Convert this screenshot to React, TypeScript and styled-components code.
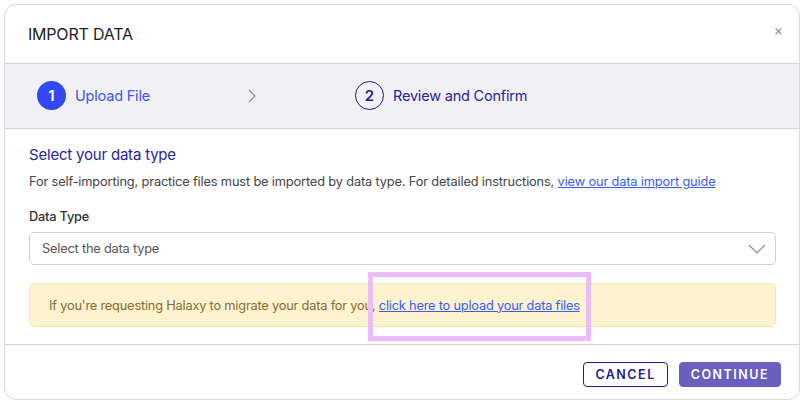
import styled, { createGlobalStyle } from 'styled-components'

const GlobalStyle = createGlobalStyle`
  html, body {
    margin: 0;
    padding: 0;
    background: #ffffff;
    font-family: Inter, "Noto Sans", sans-serif;
  }
`

const Modal = styled.div`
  margin: 4px;
  width: 796px;
  height: 396px;
  box-sizing: border-box;
  border: 1px solid #d9d9de;
  border-radius: 12px;
  display: flex;
  flex-direction: column;
  overflow: hidden;
  background: #ffffff;
`

const Header = styled.div`
  height: 59px;
  display: flex;
  align-items: center;
  justify-content: space-between;
  padding: 0 16px 0 23px;
  border-bottom: 1px solid #d6d6dc;
  box-sizing: border-box;
`

const Title = styled.h1`
  margin: 0;
  font-size: 16px;
  font-weight: 400;
  color: #1d1d1f;
  letter-spacing: -0.2px;
`

const Close = styled.button`
  border: none;
  background: none;
  padding: 0;
  margin-top: -10px;
  font-size: 14px;
  color: #8a8a8a;
  cursor: pointer;
  font-family: inherit;
`

const Stepper = styled.div`
  height: 65px;
  background: #f1f0f5;
  border-bottom: 1px solid #d6d6dc;
  display: flex;
  align-items: center;
  padding: 0 0 1px 32px;
  box-sizing: border-box;
`

const Step = styled.div<{ $width?: number }>`
  display: flex;
  align-items: center;
  gap: 9px;
  width: ${p => (p.$width ? `${p.$width}px` : 'auto')};
`

const Circle = styled.div<{ $active?: boolean }>`
  width: 29px;
  height: 29px;
  border-radius: 50%;
  box-sizing: border-box;
  display: flex;
  align-items: center;
  justify-content: center;
  font-size: 15px;
  font-weight: 600;
  background: ${p => (p.$active ? '#3148f5' : 'transparent')};
  color: ${p => (p.$active ? '#ffffff' : '#1e1a8f')};
  border: ${p => (p.$active ? 'none' : '1.5px solid #1e1a8f')};
`

const StepLabel = styled.span<{ $active?: boolean }>`
  font-size: 14.5px;
  color: ${p => (p.$active ? '#4057f0' : '#2a2499')};
  letter-spacing: -0.2px;
`

const Chevron = styled.div`
  width: 108px;
  display: flex;
  align-items: center;
`

const Body = styled.div`
  flex: 1;
  padding: 16px 23px 0 24px;
  border-bottom: 1px solid #d6d6dc;
`

const Heading = styled.h2`
  margin: 0 0 10px;
  font-size: 15px;
  font-weight: 400;
  color: #2a2499;
  letter-spacing: -0.2px;
`

const Text = styled.p`
  margin: 0 0 20px;
  font-size: 12.8px;
  color: #444;
  letter-spacing: -0.15px;
`

const Link = styled.a`
  color: #3b5bf5;
  text-decoration: underline;
  cursor: pointer;
`

const Label = styled.div`
  font-size: 12.8px;
  font-weight: 500;
  color: #333;
  margin-bottom: 8px;
  letter-spacing: -0.2px;
`

const Select = styled.div`
  height: 33px;
  box-sizing: border-box;
  border: 1px solid #cfcfd4;
  border-radius: 5px;
  display: flex;
  align-items: center;
  justify-content: space-between;
  padding: 0 8px 0 12px;
  font-size: 12.8px;
  color: #555;
  letter-spacing: -0.2px;
  margin-bottom: 18px;
`

const Alert = styled.div`
  height: 44px;
  box-sizing: border-box;
  background: #fef3cf;
  border: 1px solid #f8e8b0;
  border-radius: 5px;
  display: flex;
  align-items: center;
  padding-left: 19px;
  font-size: 12.8px;
  color: #8a6a33;
  letter-spacing: -0.2px;
`

const Highlight = styled.span`
  position: relative;
`

const HighlightBox = styled.span`
  position: absolute;
  left: -11px;
  right: -11px;
  top: -26px;
  bottom: -28px;
  border: 5px solid #ebbcf7;
  pointer-events: none;
`

const Footer = styled.div`
  height: 54px;
  display: flex;
  align-items: center;
  justify-content: flex-end;
  gap: 11px;
  padding: 4px 18px 0 0;
  box-sizing: border-box;
`

const Button = styled.button<{ $primary?: boolean }>`
  height: 25px;
  padding: 0 11px;
  border-radius: 4px;
  font-family: inherit;
  font-size: 12.5px;
  font-weight: 600;
  letter-spacing: 1.5px;
  cursor: pointer;
  background: ${p => (p.$primary ? '#6a5fbf' : '#ffffff')};
  color: ${p => (p.$primary ? '#ffffff' : '#1e1a8f')};
  border: 1px solid ${p => (p.$primary ? '#6a5fbf' : '#1e1a8f')};
`

const App = () => {
  return (
    <>
      <GlobalStyle />
      <Modal>
        <Header>
          <Title>IMPORT DATA</Title>
          <Close>×</Close>
        </Header>
        <Stepper>
          <Step $width={210}>
            <Circle $active>1</Circle>
            <StepLabel $active>Upload File</StepLabel>
          </Step>
          <Chevron>
            <svg width="10" height="16" viewBox="0 0 10 16">
              <path d="M2 2 L8 8 L2 14" fill="none" stroke="#8a8a90" strokeWidth="1.2" />
            </svg>
          </Chevron>
          <Step>
            <Circle>2</Circle>
            <StepLabel>Review and Confirm</StepLabel>
          </Step>
        </Stepper>
        <Body>
          <Heading>Select your data type</Heading>
          <Text>
            For self-importing, practice files must be imported by data type. For detailed instructions,{' '}
            <Link>view our data import guide</Link>
          </Text>
          <Label>Data Type</Label>
          <Select>
            <span>Select the data type</span>
            <svg width="20" height="12" viewBox="0 0 20 12">
              <path d="M2 2 L10 10 L18 2" fill="none" stroke="#8a8a90" strokeWidth="1.2" />
            </svg>
          </Select>
          <Alert>
            If you're requesting Halaxy to migrate your data for you,&nbsp;
            <Highlight>
              <Link>click here to upload your data files</Link>
              <HighlightBox />
            </Highlight>
          </Alert>
        </Body>
        <Footer>
          <Button>CANCEL</Button>
          <Button $primary>CONTINUE</Button>
        </Footer>
      </Modal>
    </>
  )
}

export default App
